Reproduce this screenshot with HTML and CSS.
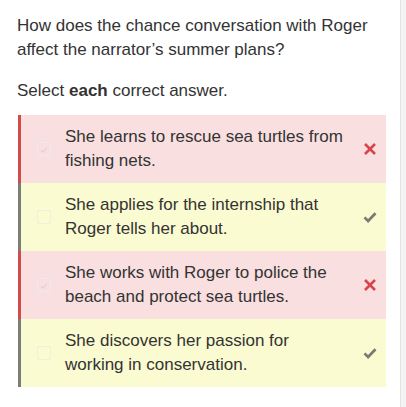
FILE: index.html
```html
<!DOCTYPE html>
<html>
<head>
<meta charset="utf-8">
<link rel="stylesheet" href="styles.css">
</head>
<body>
<div class="page">
  <div class="content">
    <p class="question">How does the chance conversation with Roger affect the narrator’s summer plans?</p>
    <p class="instr">Select <b>each</b> correct answer.</p>
    <div class="answers">
      <div class="row wrong">
        <span class="box checked"><svg viewBox="0 0 14 14" width="14" height="14"><path d="M3.5 7.2l2.4 2.4 4.6-5" fill="none" stroke="#e6cfcf" stroke-width="1.4"/></svg></span>
        <span class="text">She learns to rescue sea turtles from fishing nets.</span>
        <svg class="mark" viewBox="0 0 14 14" width="14" height="14"><path d="M2 2l10 10M12 2l-10 10" stroke="#d9434b" stroke-width="2.6" stroke-linecap="butt"/></svg>
      </div>
      <div class="row right">
        <span class="box"></span>
        <span class="text">She applies for the internship that Roger tells her about.</span>
        <svg class="mark" viewBox="0 0 14 14" width="14" height="14"><path d="M1.5 7.4l3.6 3.6 7.4-7.8" fill="none" stroke="#7a7a72" stroke-width="2.7"/></svg>
      </div>
      <div class="row wrong">
        <span class="box checked"><svg viewBox="0 0 14 14" width="14" height="14"><path d="M3.5 7.2l2.4 2.4 4.6-5" fill="none" stroke="#e6cfcf" stroke-width="1.4"/></svg></span>
        <span class="text">She works with Roger to police the beach and protect sea turtles.</span>
        <svg class="mark" viewBox="0 0 14 14" width="14" height="14"><path d="M2 2l10 10M12 2l-10 10" stroke="#d9434b" stroke-width="2.6" stroke-linecap="butt"/></svg>
      </div>
      <div class="row right">
        <span class="box"></span>
        <span class="text">She discovers her passion for working in conservation.</span>
        <svg class="mark" viewBox="0 0 14 14" width="14" height="14"><path d="M1.5 7.4l3.6 3.6 7.4-7.8" fill="none" stroke="#7a7a72" stroke-width="2.7"/></svg>
      </div>
    </div>
  </div>
  <div class="strip"></div>
</div>
</body>
</html>
```
FILE: styles.css
```css
html, body {
  margin: 0;
  padding: 0;
  background: #fff;
}
.page {
  display: flex;
  width: 406px;
  height: 407px;
  overflow: hidden;
}
.content {
  flex: 1;
  padding: 14px 14px 0 17px;
  font-family: "Liberation Sans", Arial, sans-serif;
  color: #333;
}
.question {
  margin: 0;
  font-size: 17px;
  line-height: 24px;
  width: 360px;
}
.instr {
  margin: 17px 0 0 0;
  font-size: 17px;
  line-height: 24px;
}
.instr b {
  font-weight: bold;
}
.answers {
  margin: 12px 0 0 1px;
  width: 368px;
}
.row {
  display: flex;
  align-items: center;
  height: 68px;
  box-sizing: border-box;
  border-left: 3px solid #777;
  padding: 0 9px 0 16px;
}
.row.wrong {
  background: #f9dfdf;
  border-left-color: #d24c4c;
}
.row.right {
  background: #fbfbd1;
  border-left-color: #7c7c78;
}
.box {
  width: 14px;
  height: 14px;
  box-sizing: border-box;
  border: 1px solid #f1eaea;
  border-radius: 2px;
  flex: none;
  display: flex;
}
.row.right .box {
  border-color: #f0f0dc;
}
.text {
  flex: 1;
  margin: 0 12px 0 14px;
  font-size: 17px;
  line-height: 24px;
  color: #333;
}
.mark {
  flex: none;
}
.strip {
  width: 5px;
  flex: none;
  border-left: 1px solid #e3e3e3;
  background: #f3f3f3;
}
```
